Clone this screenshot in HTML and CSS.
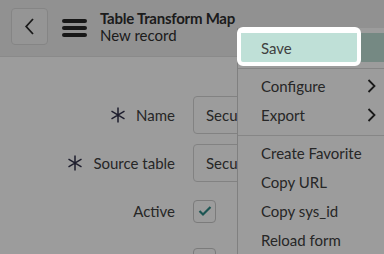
FILE: index.html
```html
<!DOCTYPE html>
<html lang="en">
<head>
    <meta charset="UTF-8">
    <meta name="viewport" content="width=device-width, initial-scale=1.0">
    <title>Table Transform Map - New record</title>
    <link rel="stylesheet" href="styles.css">
</head>
<body>
    <div id="app">
        <header class="header">
            <button class="back-btn" aria-label="Back">
                <svg width="11" height="17" viewBox="0 0 11 17"><polyline points="9,1 2.2,8.5 9,16" fill="none" stroke="#2a2a2a" stroke-width="1.8"/></svg>
            </button>
            <div class="burger"><span></span><span></span><span></span></div>
            <div class="title">
                <div class="title-main">Table Transform Map</div>
                <div class="title-sub">New record</div>
            </div>
        </header>

        <main class="form">
            <div class="label"><svg class="req" width="16" height="16" viewBox="0 0 16 16"><path d="M8 0.5V15.5M1.5 4.2L14.5 11.8M1.5 11.8L14.5 4.2" stroke="#30304a" stroke-width="1.5" fill="none"/></svg>Name</div>
            <div class="field"><div class="input">Security Incident</div></div>

            <div class="label"><svg class="req" width="16" height="16" viewBox="0 0 16 16"><path d="M8 0.5V15.5M1.5 4.2L14.5 11.8M1.5 11.8L14.5 4.2" stroke="#30304a" stroke-width="1.5" fill="none"/></svg>Source table</div>
            <div class="field"><div class="input">Security Import</div></div>

            <div class="label">Active</div>
            <div class="field"><div class="check"><svg width="14" height="12" viewBox="0 0 14 12"><polyline points="1.5,6 5,9.5 12.5,2" fill="none" stroke="#2f8c88" stroke-width="2.2"/></svg></div></div>

            <div class="label"></div>
            <div class="field"><div class="check"></div></div>
        </main>

        <!-- context menu opened from the header -->
        <div class="menu">
            <div class="item item-on">Save</div>
            <div class="sep"></div>
            <div class="item">Configure <svg class="chev" width="9" height="14" viewBox="0 0 9 14"><polyline points="1.5,1 7.5,7 1.5,13" fill="none" stroke="#2a2a2a" stroke-width="1.8"/></svg></div>
            <div class="item">Export <svg class="chev" width="9" height="14" viewBox="0 0 9 14"><polyline points="1.5,1 7.5,7 1.5,13" fill="none" stroke="#2a2a2a" stroke-width="1.8"/></svg></div>
            <div class="sep"></div>
            <div class="item">Create Favorite</div>
            <div class="item">Copy URL</div>
            <div class="item">Copy sys_id</div>
            <div class="item">Reload form</div>
        </div>

        <div class="dim"></div>
        <div class="spot"><span>Save</span></div>
    </div>
</body>
</html>
```

FILE: styles.css
```css
body{
    margin: 0;
    background: #fff;
    font-family: Lato, "Open Sans", sans-serif;
    color: #404040;
    overflow: hidden;
}
#app{
    position: relative;
    width: 384px;
    height: 254px;
    overflow: hidden;
}

/* header */
.header{
    display: flex;
    align-items: flex-start;
    height: 57px;
    padding: 8px 0 0 11px;
    box-sizing: border-box;
    background: #eeeeee;
    border-bottom: 1px solid #e2e2e2;
}
.back-btn{
    width: 37px;
    height: 37px;
    display: flex;
    align-items: center;
    justify-content: center;
    padding: 0;
    background: #f4f4f4;
    border: 1px solid #d9d9d9;
    border-radius: 4px;
}
.burger{
    display: flex;
    flex-direction: column;
    gap: 3.5px;
    width: 25px;
    margin: 11px 0 0 14px;
}
.burger span{
    height: 3.5px;
    border-radius: 2px;
    background: #262626;
}
.title{
    margin: 2px 0 0 13px;
    color: #2e2e2e;
    white-space: nowrap;
}
.title-main{
    font-size: 15px;
    font-weight: bold;
    letter-spacing: -0.25px;
    line-height: 17px;
}
.title-sub{
    font-size: 15px;
    line-height: 16px;
}

/* form */
.form{
    display: grid;
    grid-template-columns: 175px 1fr;
    grid-auto-rows: 48px;
    column-gap: 18px;
    padding-top: 34px;
}
.label{
    display: flex;
    align-items: center;
    justify-content: flex-end;
    gap: 10px;
    font-size: 15px;
    white-space: nowrap;
}
.field{
    display: flex;
    align-items: center;
}
.input{
    flex: 1;
    height: 38px;
    line-height: 36px;
    padding: 0 12px;
    box-sizing: border-box;
    border: 1px solid #d5d5d5;
    border-radius: 4px;
    font-size: 15px;
    white-space: nowrap;
    overflow: hidden;
}
.check{
    width: 23px;
    height: 23px;
    box-sizing: border-box;
    border: 1px solid #c9c9c9;
    border-radius: 4px;
    display: flex;
    align-items: center;
    justify-content: center;
}

/* menu */
.menu{
    position: absolute;
    left: 237px;
    top: 28px;
    width: 170px;
    padding-top: 5px;
    background: #fff;
    border-left: 1px solid #d2d2d2;
    font-size: 15px;
}
.item{
    display: flex;
    align-items: center;
    height: 29px;
    padding-left: 23px;
    white-space: nowrap;
}
.item-on{
    background: #bfe0d7;
}
.chev{
    position: absolute;
    left: 129px;
}
.sep{
    height: 1px;
    margin: 6px 0 2px;
    background: #dcdcdc;
}

/* tour highlight */
.dim{
    position: absolute;
    inset: 0;
    background: rgba(0, 0, 0, 0.39);
}
.spot{
    position: absolute;
    left: 237px;
    top: 27px;
    width: 96px;
    height: 29px;
    padding-left: 20px;
    display: flex;
    align-items: center;
    background: #bfe0d7;
    border: solid #fff;
    border-width: 6px 4px 4px 4px;
    border-radius: 6px;
    font-size: 15px;
    color: #404040;
}
```
